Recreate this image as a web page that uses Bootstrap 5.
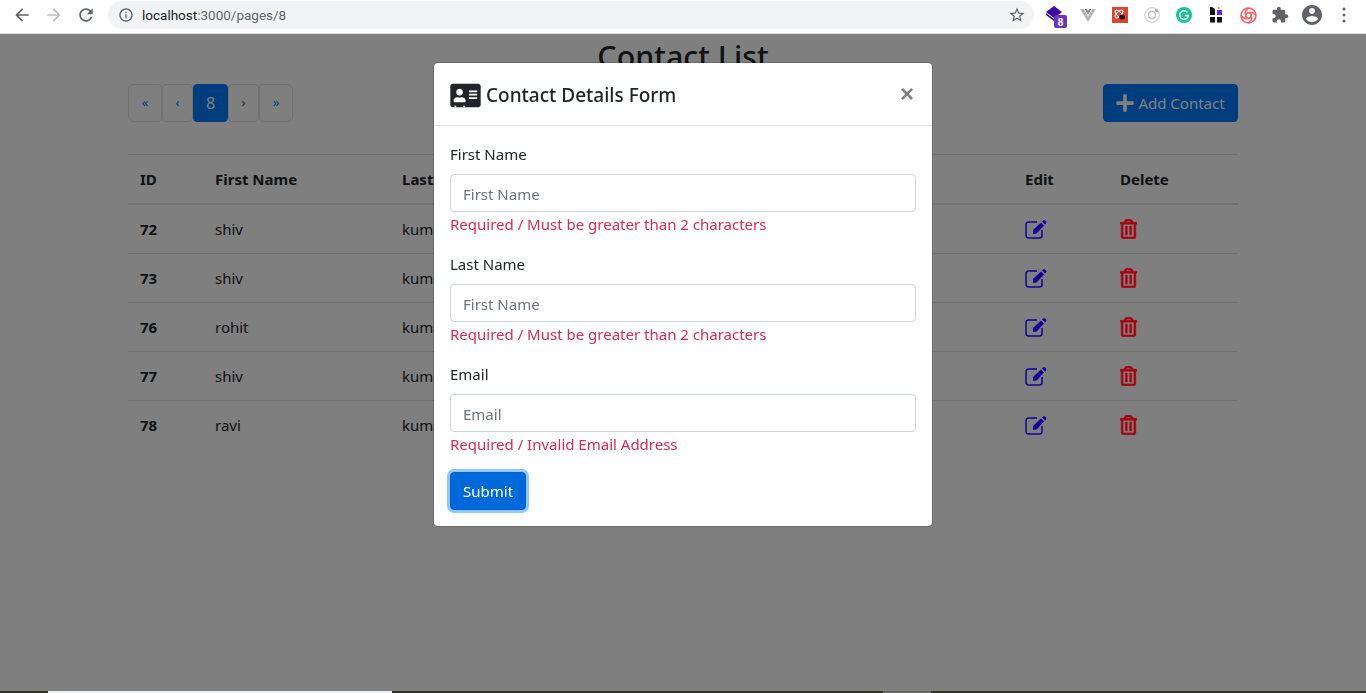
<!DOCTYPE html>
<html lang="en">
<head>
    <meta charset="UTF-8">
    <meta name="viewport" content="width=device-width, initial-scale=1.0">
    <title>Contact List</title>
    <link rel="stylesheet" href="https://cdn.jsdelivr.net/npm/bootstrap@5.3.0/dist/css/bootstrap.min.css">
    <style>
        html, body { height: 100%; overflow: hidden; }
        body { font-family: "Noto Sans", "Open Sans", sans-serif; font-size: 15px; color: #212529; background: #fff; display: flex; flex-direction: column; }

        /* browser chrome */
        .chrome-bar { height: 34px; flex: none; background: #fff; border-bottom: 1px solid #dadce0; padding: 1px 6px 4px; }
        .chrome-cell { width: 32px; height: 28px; flex: none; }
        .omnibox { height: 28px; margin: 0 6px; background: #f1f3f4; border-radius: 14px; padding: 0 8px 0 10px; font-family: "Roboto", sans-serif; font-size: 13.5px; color: #5f6368; }
        .omnibox b { font-weight: 400; color: #202124; }
        .page-area { flex: 1 1 auto; min-height: 0; }
        .desktop-strip { height: 2px; flex: none; background: #33361f; position: relative; z-index: 1060; }
        .strip-white { margin-left: 48px; width: 344px; background: #eceef0; }
        .strip-grey { margin-left: 491px; width: 48px; background: #66685a; }

        /* page */
        .page-title { font-size: 30.4px; line-height: 38px; font-weight: 500; margin: 4px 0 8px; }
        .page-wrap { width: 1110px; margin: 0 auto; }
        .pager { margin: 0; }
        .pager .page-link { height: 38px; padding: 0; display: flex; align-items: center; justify-content: center; font-size: 13px; color: #007bff; border-radius: 4px; border-color: #dee2e6; background: transparent; }
        .pager .page-item:not(:first-child) .page-link { margin-left: 0; }
        .pager .page-item:first-child .page-link, .pager .page-item:last-child .page-link { width: 34px; }
        .pager .pager-mid .page-link { width: 31px; }
        .pager .page-item.active .page-link { width: 35px; font-size: 16px; background: #007bff; border-color: #007bff; color: #fff; }
        .pager .page-item.disabled .page-link { color: #495057; }
        .add-btn { height: 38px; width: 135px; background: #007bff; border-color: #007bff; font-size: 15px; padding: 0; border-radius: 4px; }
        .contact-table { table-layout: fixed; margin-top: 32px; font-size: 15px; color: #212529; }
        .contact-table th, .contact-table td { padding: 12px; height: 49px; line-height: 24px; vertical-align: middle; border-top: 1px solid #dee2e6; border-bottom: 0; }
        .contact-table thead th { border-bottom: 2px solid #dee2e6; }
        .contact-table tbody td { color: #212529; }
        .icon-lift { position: relative; z-index: 1051; display: block; }
        .icon-edit { color: #16009c; }
        .icon-trash { fill: #a8000f; stroke: #a8000f; stroke-width: 14; }

        /* modal */
        .modal-backdrop { top: 34px; height: calc(100vh - 34px); }
        .modal { top: 34px; height: calc(100vh - 34px); }
        .form-modal .modal-content { border-radius: 4.8px; }
        .form-modal .modal-header { padding: 16px; height: 63px; border-bottom-color: #dee2e6; }
        .form-modal .modal-title { font-size: 19px; line-height: 30px; font-weight: 500; color: #212529; padding-top: 2px; gap: 5px; }
        .close-x { background: none; border: 0; padding: 0; margin-right: 2px; font-size: 24px; line-height: 1; font-weight: 700; color: #000; opacity: .5; font-family: "Liberation Sans", sans-serif; }
        .form-modal .form-label { margin-bottom: 8px; line-height: 24px; }
        .form-modal .form-control { height: 38px; padding: 7px 12px 5px; font-size: 15px; border-color: #ced4da; border-radius: 4px; }
        .form-modal .form-control::placeholder { color: #6c757d; }
        .field-error { color: #dc2a4e; line-height: 24px; }
        .submit-btn { height: 38px; padding: 0 12px; font-size: 15px; background: #0069d9; border-color: #0062cc; box-shadow: 0 0 0 3px rgba(38, 143, 255, .5); border-radius: 4px; }
    </style>
</head>
<body>

    <!-- browser toolbar -->
    <div class="chrome-bar d-flex align-items-center">
        <div class="chrome-cell d-flex align-items-center justify-content-center"><svg width="20" height="20" viewBox="0 0 24 24" fill="#5f6368"><path d="M20 11H7.83l5.59-5.59L12 4l-8 8 8 8 1.41-1.41L7.83 13H20v-2z"/></svg></div>
        <div class="chrome-cell d-flex align-items-center justify-content-center"><svg width="20" height="20" viewBox="0 0 24 24" fill="#bcbec0"><path d="M12 4l-1.41 1.41L16.17 11H4v2h12.17l-5.58 5.59L12 20l8-8z"/></svg></div>
        <div class="chrome-cell d-flex align-items-center justify-content-center"><svg width="20" height="20" viewBox="0 0 24 24" fill="#5f6368"><path d="M17.65 6.35C16.2 4.9 14.21 4 12 4c-4.42 0-7.99 3.58-7.99 8s3.57 8 7.99 8c3.73 0 6.84-2.55 7.73-6h-2.08c-.82 2.33-3.04 4-5.65 4-3.31 0-6-2.69-6-6s2.69-6 6-6c1.66 0 3.14.69 4.22 1.78L13 11h7V4l-2.35 2.35z"/></svg></div>
        <div class="omnibox flex-grow-1 d-flex align-items-center">
            <svg width="16" height="16" viewBox="0 0 24 24" fill="#5f6368" class="me-2"><path d="M11 7h2v2h-2zm0 4h2v6h-2zm1-9C6.48 2 2 6.48 2 12s4.48 10 10 10 10-4.48 10-10S17.52 2 12 2zm0 18c-4.41 0-8-3.59-8-8s3.59-8 8-8 8 3.59 8 8-3.59 8-8 8z"/></svg>
            <span class="flex-grow-1"><b>localhost</b>:3000/pages/8</span>
            <svg width="18" height="18" viewBox="0 0 24 24" fill="#5f6368"><path d="M22 9.24l-7.19-.62L12 2 9.19 8.63 2 9.24l5.46 4.73L5.82 21 12 17.27 18.18 21l-1.63-7.03L22 9.24zM12 15.4l-3.76 2.27 1-4.28-3.32-2.88 4.38-.38L12 6.1l1.71 4.04 4.38.38-3.32 2.88 1 4.28L12 15.4z"/></svg>
        </div>
        <!-- extensions -->
        <div class="chrome-cell d-flex align-items-center justify-content-center"><svg width="24" height="28" viewBox="0 0 24 28"><path d="M10 5l8 6-8 6-8-6z" fill="#3c0a9e"/><path d="M2 12l8 6 4-3v3l-4 2-8-6z" fill="#2a0a78"/><rect x="10" y="14" width="13" height="13" rx="2" fill="#6a35c2"/><text x="16.500" y="24.500" text-anchor="middle" font-family="Liberation Sans" font-size="10" font-weight="700" fill="#fff">8</text></svg></div>
        <div class="chrome-cell d-flex align-items-center justify-content-center"><svg width="16" height="14" viewBox="0 0 18 16"><path d="M0 1h4l5 9 5-9h4L9 16z" fill="#b5b5b5"/><path d="M5 1h3l1 2 1-2h3L9 8z" fill="#8f8f8f"/></svg></div>
        <div class="chrome-cell d-flex align-items-center justify-content-center"><svg width="16" height="16" viewBox="0 0 16 16"><rect width="16" height="16" fill="#d9442f"/><g fill="none" stroke="#fff" stroke-width="1"><ellipse cx="7" cy="7" rx="5" ry="2.200" transform="rotate(45 7 7)"/><ellipse cx="7" cy="7" rx="5" ry="2.200" transform="rotate(-45 7 7)"/></g><ellipse cx="10" cy="10" rx="3" ry="2.500" fill="#2a1512"/></svg></div>
        <div class="chrome-cell d-flex align-items-center justify-content-center"><svg width="16" height="16" viewBox="0 0 16 16" fill="none"><circle cx="8" cy="8" r="7.300" stroke="#d2d2d2" stroke-width="1.200"/><circle cx="8" cy="8" r="3.500" stroke="#bdbdbd" stroke-width="1.400"/><circle cx="12.500" cy="3.500" r="1.500" fill="#a8a8a8"/></svg></div>
        <div class="chrome-cell d-flex align-items-center justify-content-center"><svg width="16" height="16" viewBox="0 0 16 16"><circle cx="8" cy="8" r="8" fill="#15c39a"/><path d="M11.300 5.300A4.300 4.300 0 1 0 12.300 8.500H8.800" fill="none" stroke="#fff" stroke-width="1.600"/></svg></div>
        <div class="chrome-cell d-flex align-items-center justify-content-center"><svg width="12" height="16" viewBox="0 0 12 16"><path d="M0 0h2l3 2v6H0z" fill="#111"/><rect x="8" y="0" width="1.500" height="2" fill="#b88ae0"/><rect x="7" y="3" width="5" height="5" fill="#7a1fd0"/><rect y="10" width="5" height="5.500" fill="#111"/><rect x="7" y="10" width="5" height="5.500" fill="#111"/></svg></div>
        <div class="chrome-cell d-flex align-items-center justify-content-center"><svg width="17" height="17" viewBox="0 0 16 16" fill="none" stroke="#f4686c" stroke-width="1.600"><circle cx="8" cy="8" r="7"/><circle cx="8" cy="8" r="2.600"/><path d="M8 1C5 3 4.500 6 5.500 8M15 8c-2-3-5-3.500-7-2.500M8 15c3-2 3.500-5 2.500-7M1 8c2 3 5 3.500 7 2.500"/></svg></div>
        <div class="chrome-cell d-flex align-items-center justify-content-center"><svg width="18" height="18" viewBox="0 0 24 24" fill="#5f6368"><path d="M20.5 11H19V7c0-1.100-.9-2-2-2h-4V3.500C13 2.120 11.880 1 10.500 1S8 2.120 8 3.500V5H4c-1.100 0-1.990.9-1.990 2v3.800H3.500c1.490 0 2.700 1.210 2.700 2.700s-1.210 2.700-2.700 2.700H2V20c0 1.100.9 2 2 2h3.800v-1.500c0-1.490 1.210-2.700 2.700-2.700 1.490 0 2.700 1.210 2.700 2.700V22H17c1.100 0 2-.9 2-2v-4h1.500c1.380 0 2.500-1.120 2.500-2.500S21.880 11 20.500 11z"/></svg></div>
        <div class="chrome-cell d-flex align-items-center justify-content-center"><svg width="24" height="24" viewBox="0 0 24 24" fill="#5f6368"><path d="M12 2C6.480 2 2 6.480 2 12s4.480 10 10 10 10-4.480 10-10S17.520 2 12 2zm0 3c1.660 0 3 1.340 3 3s-1.340 3-3 3-3-1.340-3-3 1.340-3 3-3zm0 14.200c-2.500 0-4.710-1.280-6-3.220.03-1.990 4-3.080 6-3.080 1.990 0 5.970 1.090 6 3.080-1.290 1.940-3.500 3.220-6 3.220z"/></svg></div>
        <div class="chrome-cell d-flex align-items-center justify-content-center"><svg width="4" height="16" viewBox="0 0 4 16" fill="#5f6368"><circle cx="2" cy="2" r="1.500"/><circle cx="2" cy="8" r="1.500"/><circle cx="2" cy="14" r="1.500"/></svg></div>
    </div>

    <!-- page behind the dialog -->
    <div class="page-area">
        <div class="page-wrap">
            <h2 class="page-title text-center">Contact List</h2>
            <div class="d-flex justify-content-between">
                <ul class="pagination pager">
                    <li class="page-item"><a class="page-link" href="#">«</a></li>
                    <li class="page-item pager-mid"><a class="page-link" href="#">‹</a></li>
                    <li class="page-item active"><a class="page-link" href="#">8</a></li>
                    <li class="page-item pager-mid disabled"><a class="page-link" href="#">›</a></li>
                    <li class="page-item"><a class="page-link" href="#">»</a></li>
                </ul>
                <button class="btn btn-primary add-btn d-flex align-items-center justify-content-center gap-1">
                    <svg width="18" height="20" viewBox="0 0 448 512" fill="#fff"><path d="M416 208H272V64c0-17.670-14.330-32-32-32h-32c-17.670 0-32 14.330-32 32v144H32c-17.670 0-32 14.330-32 32v32c0 17.670 14.330 32 32 32h144v144c0 17.670 14.330 32 32 32h32c17.670 0 32-14.330 32-32V304h144c17.670 0 32-14.330 32-32v-32c0-17.670-14.330-32-32-32z"/></svg>
                    Add Contact
                </button>
            </div>
            <table class="table contact-table">
                <colgroup><col width="75"><col width="187"><col width="250"><col width="373"><col width="95"><col width="130"></colgroup>
                <thead>
                    <tr><th>ID</th><th>First Name</th><th>Last Name</th><th>Email</th><th>Edit</th><th>Delete</th></tr>
                </thead>
                <tbody id="contactRows"></tbody>
            </table>
        </div>
    </div>
    <div class="desktop-strip d-flex"><div class="strip-white"></div><div class="strip-grey"></div></div>

    <div class="modal-backdrop fade show"></div>

    <div class="modal d-block form-modal">
        <div class="modal-dialog">
            <div class="modal-content">
                <div class="modal-header d-flex align-items-center justify-content-between">
                    <h5 class="modal-title d-flex align-items-center">
                        <svg width="31" height="27" viewBox="0 0 576 512" fill="#212529"><path d="M528 32H48C21.500 32 0 53.500 0 80v352c0 26.500 21.500 48 48 48h480c26.500 0 48-21.500 48-48V80c0-26.500-21.500-48-48-48zm-352 96c35.300 0 64 28.700 64 64s-28.700 64-64 64-64-28.700-64-64 28.700-64 64-64zm112 236.800c0 10.600-10 19.200-22.400 19.200H86.400C74 384 64 375.400 64 364.800v-19.200c0-31.800 30.100-57.600 67.200-57.600h5c12.300 5.100 25.700 8 39.800 8s27.600-2.900 39.800-8h5c37.100 0 67.200 25.800 67.200 57.600v19.200zM512 312c0 4.400-3.600 8-8 8H360c-4.400 0-8-3.600-8-8v-16c0-4.400 3.600-8 8-8h144c4.400 0 8 3.600 8 8v16zm0-64c0 4.400-3.600 8-8 8H360c-4.400 0-8-3.600-8-8v-16c0-4.400 3.600-8 8-8h144c4.400 0 8 3.600 8 8v16zm0-64c0 4.400-3.600 8-8 8H360c-4.400 0-8-3.600-8-8v-16c0-4.400 3.600-8 8-8h144c4.400 0 8 3.600 8 8v16z"/><rect x="80" y="448" width="32" height="32" fill="#fff"/><rect x="240" y="448" width="32" height="32" fill="#fff"/></svg>
                        Contact Details Form
                    </h5>
                    <button type="button" class="close-x">×</button>
                </div>
                <div class="modal-body p-3">
                    <form>
                        <div class="mb-3">
                            <label class="form-label">First Name</label>
                            <input type="text" class="form-control" placeholder="First Name">
                            <div class="field-error">Required / Must be greater than 2 characters</div>
                        </div>
                        <div class="mb-3">
                            <label class="form-label">Last Name</label>
                            <input type="text" class="form-control" placeholder="First Name">
                            <div class="field-error">Required / Must be greater than 2 characters</div>
                        </div>
                        <div class="mb-3">
                            <label class="form-label">Email</label>
                            <input type="text" class="form-control" placeholder="Email">
                            <div class="field-error">Required / Invalid Email Address</div>
                        </div>
                        <button type="submit" class="btn btn-primary submit-btn">Submit</button>
                    </form>
                </div>
            </div>
        </div>
    </div>

    <script src="https://cdn.jsdelivr.net/npm/bootstrap@5.3.0/dist/js/bootstrap.bundle.min.js"></script>
    <script>
        const contacts = [
            { id: 72, first: "shiv", last: "kumar" },
            { id: 73, first: "shiv", last: "kumar" },
            { id: 76, first: "rohit", last: "kumar" },
            { id: 77, first: "shiv", last: "kumar" },
            { id: 78, first: "ravi", last: "kumar" }
        ];
        const editIcon = `<svg class="icon-lift icon-edit" width="22" height="20" viewBox="0 0 22 20"><path d="M12 3H3.500A2.500 2.500 0 0 0 1 5.500v11A2.500 2.500 0 0 0 3.500 19h11a2.500 2.500 0 0 0 2.500-2.500V11" fill="none" stroke="currentColor" stroke-width="1.500"/><path d="M8 11l8-7.500 3 3L11.500 14.500 8 15z" fill="currentColor"/><path d="M17 2.500l1-1c.6-.5 1.300-.5 2 0l1 1c.5.6.5 1.300 0 2l-1 1z" fill="currentColor"/></svg>`;
        const trashIcon = `<svg class="icon-lift icon-trash" width="17" height="20" viewBox="0 0 448 512"><path d="M268 416h24a12 12 0 0 0 12-12V188a12 12 0 0 0-12-12h-24a12 12 0 0 0-12 12v216a12 12 0 0 0 12 12zM432 80h-82.410l-34-56.700A48 48 0 0 0 274.410 0H173.590a48 48 0 0 0-41.160 23.300L98.410 80H16A16 16 0 0 0 0 96v16a16 16 0 0 0 16 16h16v336a48 48 0 0 0 48 48h288a48 48 0 0 0 48-48V128h16a16 16 0 0 0 16-16V96a16 16 0 0 0-16-16zM171.840 50.910A6 6 0 0 1 177 48h94a6 6 0 0 1 5.150 2.910L293.610 80H154.390zM368 464H80V128h288zm-212-48h24a12 12 0 0 0 12-12V188a12 12 0 0 0-12-12h-24a12 12 0 0 0-12 12v216a12 12 0 0 0 12 12z"/></svg>`;
        document.getElementById("contactRows").innerHTML = contacts.map(c => `
            <tr>
                <td class="fw-bold">${c.id}</td>
                <td>${c.first}</td>
                <td>${c.last}</td>
                <td></td>
                <td>${editIcon}</td>
                <td>${trashIcon}</td>
            </tr>`).join("");
    </script>

</body>
</html>
